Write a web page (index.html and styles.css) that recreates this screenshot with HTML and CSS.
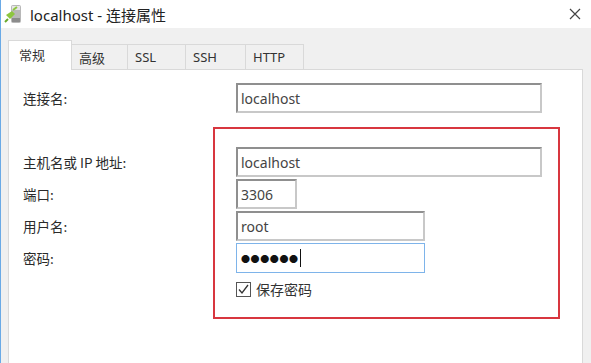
FILE: index.html
```html
<!DOCTYPE html>
<html>
<head>
<meta charset="utf-8">
<link rel="stylesheet" href="styles.css">
</head>
<body>
<div class="window">
  <div class="titlebar">
    <svg class="app-icon" width="20" height="22" viewBox="0 0 20 22">
      <rect x="7" y="2" width="10" height="18" rx="2" fill="#b8b8b8"/>
      <rect x="8" y="3" width="8" height="4" fill="#e6e6e6"/>
      <rect x="8" y="15" width="8" height="4" fill="#8c8c8c"/>
      <path d="M2 12 L8 8 L11 11 L6 16 Z" fill="#8dc63f"/>
      <path d="M9 7 L13 4" stroke="#8dc63f" stroke-width="2"/>
      <path d="M4 16 L1 19" stroke="#6aa82a" stroke-width="2"/>
    </svg>
    <span class="title">localhost - 连接属性</span>
    <svg class="close" width="12" height="12" viewBox="0 0 12 12">
      <path d="M1 1 L11 11 M11 1 L1 11" stroke="#444" stroke-width="1.2"/>
    </svg>
  </div>
  <div class="client">
    <div class="tabs">
      <div class="tab active">常规</div>
      <div class="tab">高级</div>
      <div class="tab">SSL</div>
      <div class="tab">SSH</div>
      <div class="tab">HTTP</div>
    </div>
    <div class="panel">
      <div class="row first">
        <label class="lbl">连接名:</label>
        <div class="field w-long">localhost</div>
      </div>
      <div class="group">
        <div class="row">
          <label class="lbl">主机名或 IP 地址:</label>
          <div class="field w-long">localhost</div>
        </div>
        <div class="row">
          <label class="lbl">端口:</label>
          <div class="field w-port">3306</div>
        </div>
        <div class="row">
          <label class="lbl">用户名:</label>
          <div class="field w-mid">root</div>
        </div>
        <div class="row">
          <label class="lbl">密码:</label>
          <div class="field w-mid focus"><span class="dots">●●●●●●</span><span class="caret"></span></div>
        </div>
        <div class="check-row">
          <span class="checkbox">
            <svg width="13" height="13" viewBox="0 0 13 13"><path d="M2 6.5 L5 10 L11 2" fill="none" stroke="#333" stroke-width="1.3"/></svg>
          </span>
          <span class="check-label">保存密码</span>
        </div>
        <div class="highlight"></div>
      </div>
    </div>
  </div>
</div>
</body>
</html>
```
FILE: styles.css
```css
html, body {
  margin: 0;
  padding: 0;
  width: 591px;
  height: 363px;
  overflow: hidden;
  background: #f0f0f0;
  font-family: "Segoe UI", "Noto Sans", "Noto Sans CJK SC", sans-serif;
}
.window {
  width: 591px;
  height: 363px;
  box-sizing: border-box;
  border-left: 1px solid #6aaae6;
  display: flex;
  flex-direction: column;
}
.titlebar {
  height: 28px;
  background: #ffffff;
  display: flex;
  align-items: center;
  padding-left: 3px;
  flex-shrink: 0;
}
.app-icon {
  margin-right: 6px;
}
.title {
  font-family: "Noto Sans", "Noto Sans CJK SC", sans-serif;
  font-size: 15px;
  color: #222;
  flex: 1;
}
.close {
  margin-right: 10px;
}
.client {
  flex: 1;
  display: flex;
  flex-direction: column;
  padding: 11px 8px 0 7px;
  background: #f0f0f0;
}
.tabs {
  display: flex;
  align-items: flex-end;
  height: 30px;
  position: relative;
  z-index: 1;
}
.tab {
  height: 25px;
  box-sizing: border-box;
  border: 1px solid #d9d9d9;
  border-bottom: none;
  border-left: none;
  background: #f0f0f0;
  font-family: "Noto Sans", "Noto Sans CJK SC", sans-serif;
  font-size: 13px;
  color: #333;
  display: flex;
  align-items: center;
  padding-left: 7px;
}
.tab:nth-child(2) { width: 56px; }
.tab:nth-child(3) { width: 58px; }
.tab:nth-child(4) { width: 60px; }
.tab:nth-child(5) { width: 58px; }
.tab.active {
  height: 30px;
  width: 64px;
  background: #ffffff;
  border-left: 1px solid #d9d9d9;
  padding-left: 10px;
  padding-bottom: 2px;
  margin-bottom: -1px;
}
.panel {
  flex: 1;
  background: #ffffff;
  border: 1px solid #d9d9d9;
  border-bottom: none;
  padding: 13px 0 0 14px;
  font-family: "Noto Sans CJK SC", "Noto Sans", sans-serif;
}
.row {
  display: flex;
  align-items: center;
  height: 30px;
  margin-bottom: 2px;
}
.row.first {
  margin-bottom: 34px;
}
.lbl {
  width: 213px;
  font-size: 13.5px;
  color: #2a2a2a;
}
.field {
  height: 30px;
  box-sizing: border-box;
  border: 2px solid #a0a0a0;
  border-top-color: #8f8f8f;
  border-left-color: #8f8f8f;
  border-right-color: #c8c8c8;
  border-bottom-color: #c8c8c8;
  font-family: "Noto Sans", "Noto Sans CJK SC", sans-serif;
  font-size: 14px;
  color: #444;
  display: flex;
  align-items: center;
  padding-left: 3px;
}
.w-long { width: 306px; }
.w-port { width: 61px; }
.w-mid { width: 189px; }
.field.focus {
  border: 1px solid #7eb4ea;
  padding-left: 4px;
}
.dots {
  font-size: 9px;
  letter-spacing: 0.6px;
  color: #111;
}
.caret {
  display: inline-block;
  width: 1px;
  height: 18px;
  background: #111;
  margin-left: 1px;
}
.group {
  position: relative;
}
.check-row {
  display: flex;
  align-items: center;
  margin-left: 213px;
  margin-top: 7px;
  height: 18px;
}
.checkbox {
  width: 15px;
  height: 15px;
  box-sizing: border-box;
  border: 1px solid #555;
  display: flex;
  align-items: center;
  justify-content: center;
  margin-right: 5px;
}
.check-label {
  font-size: 14px;
  color: #333;
}
.highlight {
  position: absolute;
  left: 190px;
  top: -20px;
  width: 347px;
  height: 192px;
  box-sizing: border-box;
  border: 2px solid #d8363f;
  pointer-events: none;
}
```
